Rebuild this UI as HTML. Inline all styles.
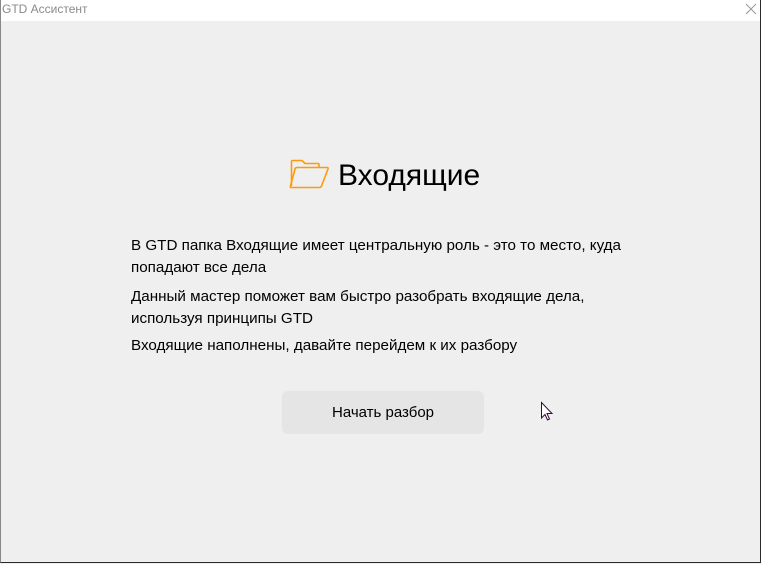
<!DOCTYPE html>
<html><head><meta charset="utf-8"><style>
html,body{margin:0;padding:0;width:761px;height:564px;overflow:hidden;background:#efefef;font-family:"Segoe UI","Liberation Sans",sans-serif;}
.win{position:absolute;left:0;top:0;width:759px;height:562px;border:1px solid #2b2b2b;border-top:none;border-left:1px solid #888;background:#efefef;}
.tb{position:absolute;left:0;top:0;width:759px;height:21px;background:#fff;}
.tt{position:absolute;left:1px;top:2px;font-size:12px;color:#8a8a8a;}
.p{position:absolute;left:130px;font-size:15.2px;color:#000;white-space:nowrap;line-height:22px;}
.h{position:absolute;left:337px;top:159px;font-size:30px;color:#000;white-space:nowrap;}
.btn{position:absolute;left:281px;top:391px;width:202px;height:43px;background:#e5e5e5;border-radius:6px;text-align:center;line-height:43px;font-size:15px;color:#000;}
</style></head><body>
<div class="win">
<div class="tb"><div class="tt">GTD Ассистент</div></div>
<svg style="position:absolute;left:0;top:0" width="761" height="564">
<path d="M745,4 L755,14 M755,4 L745,14" stroke="#999" stroke-width="1"/>
<path d="M290.5,186 V161.5 Q290.5,160.5 291.5,160.5 H301 L304,163.5 H317 Q318,163.5 318,164.5 V167.5" fill="none" stroke="#ff9a0e" stroke-width="1.6" stroke-linejoin="round"/>
<path d="M296,167.5 H326 Q327.5,167.5 327,169 L320.5,186 Q320,187.5 318.5,187.5 H290 Q289,187.5 289.5,186 L294,169 Q294.5,167.5 296,167.5 Z" fill="none" stroke="#ff9a0e" stroke-width="1.6" stroke-linejoin="round"/>
<path d="M540.5,402.5 V418 L544,414.5 L546.5,420 L548.5,419 L546,413.5 H551 Z" fill="#fff" stroke="#3a0a3a" stroke-width="1"/>
</svg>
<div class="h">Входящие</div>
<div class="p" style="top:235px">В GTD папка Входящие имеет центральную роль - это то место, куда<br>попадают все дела</div>
<div class="p" style="top:286px">Данный мастер поможет вам быстро разобрать входящие дела,<br>используя принципы GTD</div>
<div class="p" style="top:335px">Входящие наполнены, давайте перейдем к их разбору</div>
<div class="btn">Начать разбор</div>
</div>
</body></html>
